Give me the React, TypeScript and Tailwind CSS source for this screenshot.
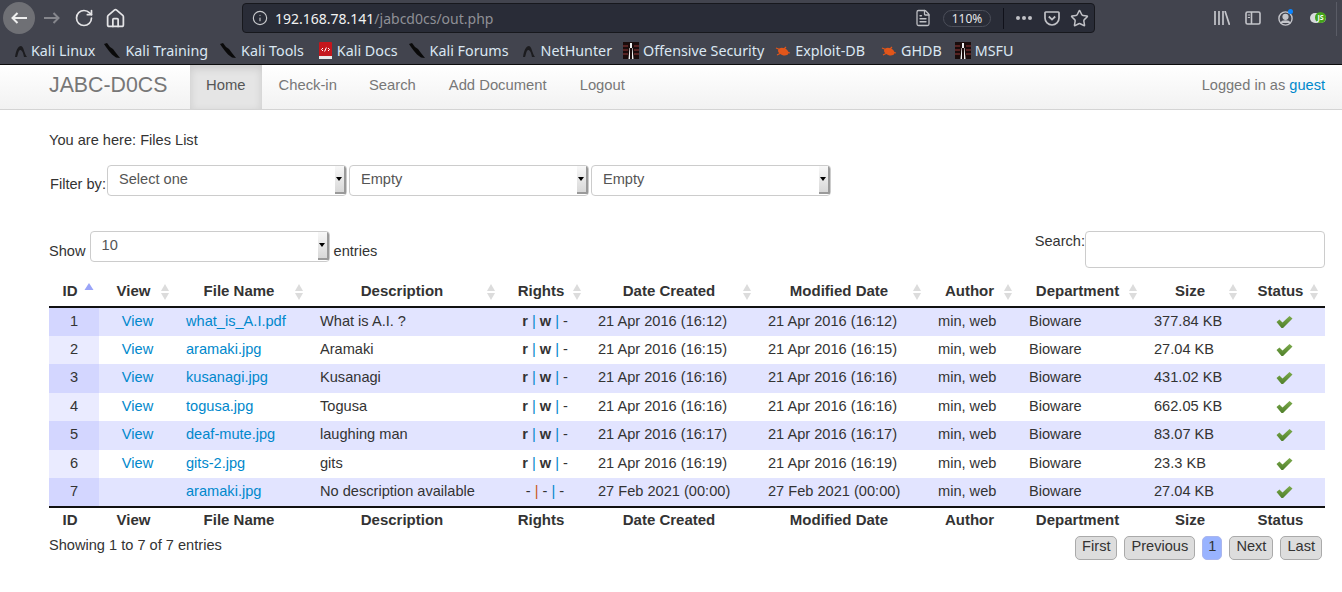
import React from 'react';
import { RotateCw, Home, Info, FileText, Star } from 'lucide-react';

const chromeFont = { fontFamily: '"Noto Sans", sans-serif' };

const NavArrow = ({ color, flip }: { color: string; flip?: boolean }) => (
  <svg width="16" height="12" viewBox="0 0 16 12" fill="none" stroke={color} strokeWidth="2" className={flip ? 'rotate-180' : ''}>
    <path d="M1.5 6 H16 M6.5 1 L1.5 6 L6.5 11" />
  </svg>
);

const KaliIcon = () => (
  <svg width="17" height="16" viewBox="0 0 17 16" className="shrink-0">
    <path d="M0 1 L3 0 L6 4 L9 6 L12 10 L16 15 L12 14.5 L8 11.5 L5 8 L2 4 Z" fill="#0a0a0a" />
  </svg>
);

const HunterIcon = () => (
  <svg width="14" height="14" viewBox="0 0 14 14" className="shrink-0">
    <path d="M1 13 C2 6 4 2 7 2 C10 3 10 9 13 13 H10 C9 8 8 6 6 6 C4 7 4 11 3 13 Z" fill="#1c1c1f" />
  </svg>
);

const DocsIcon = () => (
  <svg width="15" height="17" viewBox="0 0 15 17" className="shrink-0">
    <rect x="1" y="0" width="13" height="15" rx="1" fill="#c4161c" />
    <rect x="1" y="14" width="13" height="3" fill="#e8e8e8" />
    <path d="M5 6 L3.5 7.5 L5 9 M10 6 L11.5 7.5 L10 9 M8.4 5.5 L6.6 9.5" stroke="#fff" strokeWidth="1" fill="none" />
  </svg>
);

const OffsecIcon = () => (
  <svg width="16" height="17" viewBox="0 0 16 17" className="shrink-0">
    <rect width="16" height="17" fill="#1a0c0c" />
    <path d="M0 4 H5 M11 4 H16 M0 8 H5 M11 8 H16 M0 12 H5 M11 12 H16" stroke="#6b2a2a" strokeWidth="1.5" />
    <path d="M7 1 H9 V17 H10.5 L9.5 6 H6.5 L5.5 17 H7 Z" fill="#f0f0f0" />
  </svg>
);

const BugIcon = () => (
  <svg width="16" height="12" viewBox="0 0 16 12" className="shrink-0">
    <ellipse cx="8.5" cy="6.5" rx="5.5" ry="3.5" fill="#e2561a" transform="rotate(20 8 6)" />
    <path d="M1 3 L6 5 M2 10 L6 8 M11 2 L9 4 M15 8 L11 7" stroke="#e2561a" strokeWidth="1.2" />
  </svg>
);

const bookmarks = [
  { icon: <HunterIcon />, label: 'Kali Linux', gap: 'ml-[14px]', textGap: 'ml-[3px]' },
  { icon: <KaliIcon />, label: 'Kali Training', gap: 'ml-[9px]', textGap: 'ml-[4px]' },
  { icon: <KaliIcon />, label: 'Kali Tools', gap: 'ml-[12px]', textGap: 'ml-[4px]' },
  { icon: <DocsIcon />, label: 'Kali Docs', gap: 'ml-[14px]', textGap: 'ml-[4px]' },
  { icon: <KaliIcon />, label: 'Kali Forums', gap: 'ml-[11px]', textGap: 'ml-[4px]' },
  { icon: <HunterIcon />, label: 'NetHunter', gap: 'ml-[13px]', textGap: 'ml-[5px]' },
  { icon: <OffsecIcon />, label: 'Offensive Security', gap: 'ml-[11px]', textGap: 'ml-[4px]' },
  { icon: <BugIcon />, label: 'Exploit-DB', gap: 'ml-[11px]', textGap: 'ml-[4px]' },
  { icon: <BugIcon />, label: 'GHDB', gap: 'ml-[16px]', textGap: 'ml-[4px]' },
  { icon: <OffsecIcon />, label: 'MSFU', gap: 'ml-[13px]', textGap: 'ml-[4px]' },
];

const BrowserChrome = () => (
  <div className="h-[65px] bg-[#42444e] border-b border-[#0c0c0d] shrink-0" style={chromeFont}>
    <div className="h-9 flex items-center relative">
      <div className="ml-[3px] w-8 h-8 rounded-full bg-[#6f7075] flex items-center justify-center">
        <NavArrow color="#eeeeee" />
      </div>
      <div className="ml-[9px]">
        <NavArrow color="#85868c" flip />
      </div>
      <RotateCw className="ml-[14px] w-5 h-5 text-[#e4e4e6]" strokeWidth={2} />
      <Home className="ml-[11px] w-[21px] h-[21px] text-[#e4e4e6]" strokeWidth={2} />
      <div className="ml-[116px] w-[853px] h-[30px] bg-[#292c37] rounded border border-[#17181d] flex items-center">
        <Info className="ml-[9px] w-4 h-4 text-[#c8c9cc]" strokeWidth={1.7} />
        <span className="ml-[7px] text-[14px] text-[#f2f2f2]">192.168.78.141</span>
        <span className="text-[14px] text-[#8f9096]">/jabcd0cs/out.php</span>
        <div className="ml-auto flex items-center">
          <FileText className="w-[18px] h-[18px] text-[#c0c1c6]" strokeWidth={1.7} />
          <span className="ml-[11px] w-[48px] h-[17px] rounded-full border border-[#4b4e59] text-[12px] leading-[15px] text-[#e6e6e8] text-center">110%</span>
          <span className="ml-[12px] w-px h-[21px] bg-[#10111a]" />
          <div className="ml-[12px] flex gap-[2px]">
            <span className="w-1 h-1 rounded-full bg-[#c0c1c6]" />
            <span className="w-1 h-1 rounded-full bg-[#c0c1c6]" />
            <span className="w-1 h-1 rounded-full bg-[#c0c1c6]" />
          </div>
          <svg width="16" height="15" viewBox="0 0 16 15" className="ml-[12px]" fill="none">
            <path d="M1.8 1 H14.2 A0.8 0.8 0 0 1 15 1.8 V7 A7 7 0 0 1 1 7 V1.8 A0.8 0.8 0 0 1 1.8 1 Z" stroke="#c0c1c6" strokeWidth="1.7" />
            <path d="M4.8 5.5 L8 8.6 L11.2 5.5" stroke="#c0c1c6" strokeWidth="1.8" />
          </svg>
          <Star className="ml-[10px] mr-[5px] w-[19px] h-[19px] text-[#c0c1c6]" strokeWidth={1.9} />
        </div>
      </div>
      <svg width="16" height="14" viewBox="0 0 16 14" className="ml-[119px]" fill="none" stroke="#c4c5ca" strokeWidth="1.7">
        <path d="M1 0 V14 M5 0 V14 M9 0 V14 M11 0 L15.5 14" />
      </svg>
      <svg width="16" height="14" viewBox="0 0 16 14" className="ml-[15px]" fill="none" stroke="#c4c5ca" strokeWidth="1.6">
        <rect x="1" y="1" width="14" height="12" rx="1.5" />
        <path d="M6.5 1 V13" />
        <path d="M2.8 4 H5 M2.8 6.5 H5" strokeWidth="1.2" />
      </svg>
      <div className="ml-[17px] relative w-[15px] h-[15px]">
        <svg width="15" height="15" viewBox="0 0 15 15" fill="none" stroke="#c4c5ca" strokeWidth="1.4">
          <circle cx="7.5" cy="7.5" r="6.6" />
          <circle cx="7.5" cy="5.8" r="2.4" fill="#c4c5ca" />
          <path d="M3.2 12 C4 9.4 11 9.4 11.8 12" fill="#c4c5ca" />
        </svg>
        <span className="absolute -top-[2px] right-0 w-[5px] h-[5px] rounded-full bg-[#0a84ff]" />
      </div>
      <div className="ml-[17px] relative w-[16px] h-[10px] rounded-full bg-[#d8d9dc]">
        <span className="absolute right-0 -top-[1px] w-[11px] h-[11px] rounded-full bg-[#45a41c] text-white text-[7px] leading-[11px] font-bold text-center">JS</span>
      </div>
      <span className="absolute left-[1336px] top-[2px] w-px h-[34px] bg-[#5a5c66]" />
    </div>
    <div className="h-7 pt-[1px] flex items-center text-[14.3px] text-[#dbe7f2]">
      {bookmarks.map((item) => (
        <div key={item.label} className={`flex items-center ${item.gap}`}>
          {item.icon}
          <span className={item.textGap}>{item.label}</span>
        </div>
      ))}
    </div>
  </div>
);

const NavBar = () => (
  <div className="h-[45px] shrink-0 bg-gradient-to-b from-white to-[#f2f2f2] border-b border-[#d4d4d4] flex items-stretch pl-[49px] pr-[17px] text-[14.8px]">
    <span className="w-[141px] text-[21.3px] text-[#777777] leading-[40px]">JABC-D0CS</span>
    <span className="pl-4 pr-[17px] bg-[#e5e5e5] text-[#555555] leading-[40px] shadow-[inset_0_3px_8px_rgba(0,0,0,0.125)]">Home</span>
    <span className="px-4 text-[#777777] leading-[40px]">Check-in</span>
    <span className="pl-4 pr-[17px] text-[#777777] leading-[40px]">Search</span>
    <span className="pl-4 pr-[17px] text-[#777777] leading-[40px]">Add Document</span>
    <span className="px-4 text-[#777777] leading-[40px]">Logout</span>
    <span className="ml-auto text-[#777777] text-[14.6px] leading-[40px]">
      Logged in as <span className="text-[#0088cc]">guest</span>
    </span>
  </div>
);

const FakeSelect = ({ value, className }: { value: string; className: string }) => (
  <div className={`h-[31px] w-[240px] rounded border border-[#cccccc] bg-white flex items-stretch overflow-hidden ${className}`}>
    <span className="flex-1 pl-[11px] leading-[26px] text-[#555555]">{value}</span>
    <span className="w-[11px] mb-[1px] bg-gradient-to-b from-[#f8f8f8] to-[#d8d8d8] border-r-2 border-b-2 border-[#9a9a9a] flex items-center justify-center">
      <span className="border-x-[3px] border-t-[4px] border-x-transparent border-t-black" />
    </span>
  </div>
);

const SortIcon = ({ active }: { active?: boolean }) =>
  active ? (
    <svg width="10" height="8" viewBox="0 0 10 8" className="absolute right-[5px] top-[8px]">
      <path d="M5 0 L9.5 7 H0.5 Z" fill="#9aa4f8" />
    </svg>
  ) : (
    <svg width="10" height="16" viewBox="0 0 10 16" className="absolute right-[6px] top-[9px]">
      <path d="M5 0 L9 7 H1 Z" fill="#dcdcdc" />
      <path d="M5 16 L9 9 H1 Z" fill="#dcdcdc" />
    </svg>
  );

const CheckIcon = () => (
  <svg width="17" height="14" viewBox="0 0 17 14" className="inline-block">
    <defs>
      <linearGradient id="check" x1="0" y1="0" x2="0" y2="1">
        <stop offset="0" stopColor="#7cab4c" />
        <stop offset="1" stopColor="#4f7f2a" />
      </linearGradient>
    </defs>
    <path d="M0.5 7 L3.5 4.5 L6.5 7.5 L13.5 1 L16.5 3.5 L7 13 L5.5 13 Z" fill="url(#check)" />
  </svg>
);

const columns = [
  { label: 'ID', width: 'w-[50px]' },
  { label: 'View', width: 'w-[77px]' },
  { label: 'File Name', width: 'w-[134px]' },
  { label: 'Description', width: 'w-[192px]' },
  { label: 'Rights', width: 'w-[86px]' },
  { label: 'Date Created', width: 'w-[170px]' },
  { label: 'Modified Date', width: 'w-[170px]' },
  { label: 'Author', width: 'w-[91px]' },
  { label: 'Department', width: 'w-[125px]' },
  { label: 'Size', width: 'w-[100px]' },
  { label: 'Status', width: 'w-[81px]' },
];

const rows = [
  { id: 1, view: true, file: 'what_is_A.I.pdf', desc: 'What is A.I. ?', created: '21 Apr 2016 (16:12)', modified: '21 Apr 2016 (16:12)', size: '377.84 KB' },
  { id: 2, view: true, file: 'aramaki.jpg', desc: 'Aramaki', created: '21 Apr 2016 (16:15)', modified: '21 Apr 2016 (16:15)', size: '27.04 KB' },
  { id: 3, view: true, file: 'kusanagi.jpg', desc: 'Kusanagi', created: '21 Apr 2016 (16:16)', modified: '21 Apr 2016 (16:16)', size: '431.02 KB' },
  { id: 4, view: true, file: 'togusa.jpg', desc: 'Togusa', created: '21 Apr 2016 (16:16)', modified: '21 Apr 2016 (16:16)', size: '662.05 KB' },
  { id: 5, view: true, file: 'deaf-mute.jpg', desc: 'laughing man', created: '21 Apr 2016 (16:17)', modified: '21 Apr 2016 (16:17)', size: '83.07 KB' },
  { id: 6, view: true, file: 'gits-2.jpg', desc: 'gits', created: '21 Apr 2016 (16:19)', modified: '21 Apr 2016 (16:19)', size: '23.3 KB' },
  { id: 7, view: false, file: 'aramaki.jpg', desc: 'No description available', created: '27 Feb 2021 (00:00)', modified: '27 Feb 2021 (00:00)', size: '27.04 KB' },
];

const pageButton = 'h-[24px] px-[6px] rounded-[5px] border border-[#aaaaaa] bg-[#dddddd] text-[#333333] leading-[18px]';

export default function App() {
  return (
    <div className="w-[1342px] h-[592px] overflow-hidden bg-white flex flex-col text-[14.6px] text-[#333333]" style={{ fontFamily: '"Liberation Sans", Arial, sans-serif' }}>
      <BrowserChrome />
      <NavBar />
      <div className="px-[49px] pr-[17px]">
        <p className="mt-[20px] leading-[20px]">You are here: Files List</p>
        <div className="mt-[15px] flex items-center gap-[2px] h-[31px]">
          <span className="ml-[1px] -mr-[1px] mt-[9px]">Filter by:</span>
          <FakeSelect value="Select one" className="" />
          <FakeSelect value="Empty" className="" />
          <FakeSelect value="Empty" className="" />
        </div>
        <div className="mt-[35px] h-[37px] flex items-start">
          <div className="flex items-center h-[31px]">
            <span className="mt-[10px]">Show</span>
            <FakeSelect value="10" className="ml-[4px]" />
            <span className="ml-[4px] mt-[10px]">entries</span>
          </div>
          <span className="ml-auto leading-[20px]">Search:</span>
          <div className="w-[240px] h-[37px] rounded border border-[#cccccc] bg-white" />
        </div>
        <table className="mt-[7px] w-[1276px] table-fixed border-collapse">
          <thead>
            <tr className="h-[32px] border-b-2 border-[#111111]">
              {columns.map((col, i) => (
                <th key={col.label} className={`${col.width} relative pt-[2px] pl-[10px] pr-[18px] text-[15px] font-bold text-center`}>
                  {col.label}
                  <SortIcon active={i === 0} />
                </th>
              ))}
            </tr>
          </thead>
          <tbody>
            {rows.map((row, i) => {
              const odd = i % 2 === 0;
              const dash = row.view ? 'text-[#0088cc]' : 'text-[#c9581c]';
              return (
                <tr key={row.id} className={`h-[28.5px] ${odd ? 'bg-[#e2e4ff]' : 'bg-white'}`}>
                  <td className={`text-center ${odd ? 'bg-[#d3d6ff]' : 'bg-[#eaebff]'}`}>{row.id}</td>
                  <td className="text-center text-[#0088cc]">{row.view ? 'View' : ''}</td>
                  <td className="pl-[10px] text-[#0088cc]">{row.file}</td>
                  <td className="pl-[10px]">{row.desc}</td>
                  <td className="text-center">
                    {row.view ? <b>r</b> : '-'} <span className={dash}>|</span> {row.view ? <b>w</b> : '-'} <span className={row.view ? dash : 'text-[#0088cc]'}>|</span> -
                  </td>
                  <td className="pl-[10px]">{row.created}</td>
                  <td className="pl-[10px]">{row.modified}</td>
                  <td className="pl-[10px]">min, web</td>
                  <td className="pl-[10px]">Bioware</td>
                  <td className="pl-[10px]">{row.size}</td>
                  <td className="text-center"><CheckIcon /></td>
                </tr>
              );
            })}
          </tbody>
          <tfoot>
            <tr className="h-[26px] border-t-2 border-[#111111]">
              {columns.map((col) => (
                <th key={col.label} className="pt-[1px] pl-[10px] pr-[18px] text-[15px] font-bold text-center">{col.label}</th>
              ))}
            </tr>
          </tfoot>
        </table>
        <div className="mt-[3px] flex items-start">
          <span className="leading-[18px]">Showing 1 to 7 of 7 entries</span>
          <div className="ml-auto mr-[3px] flex gap-[7px]">
            <span className={pageButton}>First</span>
            <span className={pageButton}>Previous</span>
            <span className="h-[24px] px-[5px] rounded-[5px] border border-[#aab6ee] bg-[#99b3ff] text-[#333333] leading-[18px]">1</span>
            <span className={pageButton}>Next</span>
            <span className={pageButton}>Last</span>
          </div>
        </div>
      </div>
    </div>
  );
}
